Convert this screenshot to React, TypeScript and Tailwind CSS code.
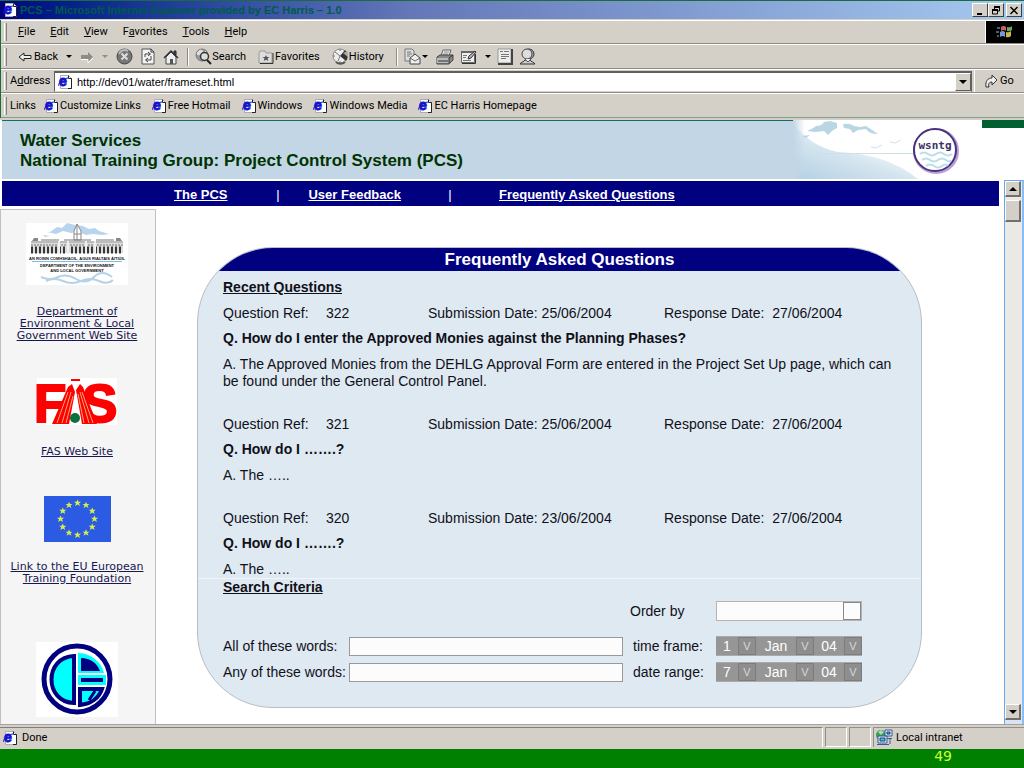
import React from 'react';

const QUESTIONS = [
  {
    ref: '322',
    submitted: '25/06/2004',
    responded: '27/06/2004',
    question: 'How do I enter the Approved Monies against the Planning Phases?',
    answer:
      'The Approved Monies from the DEHLG Approval Form are entered in the Project Set Up page, which can be found under the General Control Panel.',
  },
  { ref: '321', submitted: '25/06/2004', responded: '27/06/2004', question: 'How do I …….?', answer: 'The …..' },
  { ref: '320', submitted: '23/06/2004', responded: '27/06/2004', question: 'How do I …….?', answer: 'The …..' },
];

const MENUS = [
  { before: '', key: 'F', after: 'ile' },
  { before: '', key: 'E', after: 'dit' },
  { before: '', key: 'V', after: 'iew' },
  { before: 'F', key: 'a', after: 'vorites' },
  { before: '', key: 'T', after: 'ools' },
  { before: '', key: 'H', after: 'elp' },
];

const QUICK_LINKS = ['Customize Links', 'Free Hotmail', 'Windows', 'Windows Media', 'EC Harris Homepage'];

const PageIcon = () => (
  <svg width="16" height="16" viewBox="0 0 16 16" className="shrink-0" aria-hidden="true">
    <path d="M3.500 1.500h8l3 3v10h-11z" fill="#fff" stroke="#aab" />
    <path d="M11.500 1.500v3h3v10H11" fill="none" stroke="#222" />
    <text x="2" y="12" fontSize="14" fontWeight="900" fill="#1414c8" stroke="#1414c8" strokeWidth="1" fontFamily="Liberation Sans, sans-serif">
      e
    </text>
    <path d="M2 12C0 10 6 4 11 4" fill="none" stroke="#1414c8" />
  </svg>
);

const BackIcon = () => (
  <svg width="14" height="12" viewBox="0 0 14 12" aria-hidden="true">
    <path d="M1 6l5-4v2.500h7v3H6V10z" fill="#eee" stroke="#222" />
  </svg>
);

const ForwardIcon = () => (
  <svg width="14" height="12" viewBox="0 0 14 12" aria-hidden="true">
    <path d="M13 6L8 1v3H1v4h7v3z" fill="#8c8c88" />
    <path d="M1 8.500h7V12l5-5" fill="none" stroke="#fff" />
  </svg>
);

const StopIcon = () => (
  <svg width="17" height="17" viewBox="0 0 17 17" aria-hidden="true">
    <circle cx="8.500" cy="8.500" r="7.500" fill="#777" stroke="#444" />
    <path d="M3 6a6 6 0 0 1 9-3" fill="none" stroke="#bbb" strokeWidth="2" />
    <path d="M5.500 5.500l6 6m0-6l-6 6" stroke="#ddd" strokeWidth="2" />
  </svg>
);

const RefreshIcon = () => (
  <svg width="14" height="17" viewBox="0 0 14 17" aria-hidden="true">
    <path d="M1 1h9l3 3v12H1z" fill="#f4f4f4" stroke="#555" />
    <path d="M10 1v3h3" fill="none" stroke="#333" />
    <path d="M4 9V6h5M7 4l2.500 2L7 8M10 8v4H5m2-2l-2.500 2L7 14" fill="none" stroke="#444" />
  </svg>
);

const HomeIcon = () => (
  <svg width="16" height="16" viewBox="0 0 16 16" aria-hidden="true">
    <path d="M11 2h2v4h-2z" fill="#555" stroke="#222" />
    <path d="M3 8v7h10V8L8 3z" fill="#eee" stroke="#444" />
    <path d="M1 9l7-7 7 7" fill="none" stroke="#333" strokeWidth="1.500" />
    <path d="M7 10h3v5H7z" fill="#555" />
  </svg>
);

const SearchIcon = () => (
  <svg width="17" height="17" viewBox="0 0 17 17" aria-hidden="true">
    <circle cx="7" cy="7" r="6" fill="#999" stroke="#777" />
    <path d="M2 5l3-3 3 1-2 3-3 1zM10 3l2 3" fill="#ddd" stroke="#ddd" />
    <circle cx="9.500" cy="8.500" r="4" fill="#ddd" stroke="#333" strokeWidth="1.500" />
    <path d="M12 12l4 4" stroke="#222" strokeWidth="2" />
  </svg>
);

const FavoritesIcon = () => (
  <svg width="16" height="14" viewBox="0 0 16 14" aria-hidden="true">
    <path d="M1 3l1-2h5l1 2h6v10H1z" fill="#ddd" stroke="#999" />
    <path d="M15 3v10.500H2" fill="none" stroke="#333" />
    <path d="M8 5l1 2h2.500l-2 1.500 .8 2.500L8 9.700 5.700 11l.8-2.500-2-1.500H7z" fill="#555" />
  </svg>
);

const HistoryIcon = () => (
  <svg width="17" height="17" viewBox="0 0 17 17" aria-hidden="true">
    <circle cx="8" cy="8" r="7" fill="#eee" stroke="#888" />
    <path d="M8 8L13 2a8 8 0 0 1 1 11z" fill="#333" />
    <path d="M3 4l5 4-2 5M8 1v2M1 8h2M8 15v-2" fill="none" stroke="#777" />
    <path d="M11 5l5-2v6z" fill="#aaa" />
    <path d="M4 14a7 7 0 0 0 9 0" fill="none" stroke="#555" strokeWidth="2" />
  </svg>
);

const MailIcon = () => (
  <svg width="17" height="17" viewBox="0 0 17 17" aria-hidden="true">
    <path d="M1 1h7l2 2v10H1z" fill="#ddd" stroke="#777" />
    <path d="M3 4h4M3 6h5M3 8h3" stroke="#777" />
    <path d="M6 10l5-4 5 4v6H6z" fill="#eee" stroke="#444" />
    <path d="M6 10l5 3 5-3" fill="none" stroke="#666" />
  </svg>
);

const PrintIcon = () => (
  <svg width="18" height="16" viewBox="0 0 18 16" aria-hidden="true">
    <path d="M5 7l2-6h8l-2 6z" fill="#eee" stroke="#666" />
    <path d="M8 3h5M7 5h5" stroke="#888" />
    <path d="M1 8l3-2h13v5l-4 4H1z" fill="#888" stroke="#444" />
    <path d="M1 9h12v5H1z" fill="#bbb" />
    <path d="M2 12h10M13 9l4-3M13 14V9" stroke="#333" />
  </svg>
);

const EditIcon = () => (
  <svg width="17" height="15" viewBox="0 0 17 15" aria-hidden="true">
    <path d="M1.500 2.500h13v11h-13z" fill="#eee" stroke="#666" />
    <path d="M1 2h13v2H1z" fill="#666" />
    <path d="M3 6.500h4M3 8.500h3M3 11.500h8" stroke="#777" />
    <path d="M8 10l1-3 6-5 1 1-5 6z" fill="#bbb" stroke="#333" />
    <path d="M15.500 5v9.500H2" fill="none" stroke="#333" />
  </svg>
);

const DiscussIcon = () => (
  <svg width="16" height="17" viewBox="0 0 16 17" aria-hidden="true">
    <path d="M1 1h13v14H1z" fill="#eee" stroke="#999" />
    <path d="M15 1v15H1" fill="none" stroke="#444" strokeWidth="2" />
    <path d="M3 3.500h3M7 3.500h5M4 6.500h8M4 8.500h8M4 10.500h5" stroke="#777" />
  </svg>
);

const MessengerIcon = () => (
  <svg width="17" height="17" viewBox="0 0 17 17" aria-hidden="true">
    <path d="M1 16c1-2 4-2 5-4h5c1 2 4 2 5 4z" fill="#ccc" stroke="#333" />
    <circle cx="10" cy="6" r="5" fill="#aaa" stroke="#333" />
    <circle cx="8" cy="6" r="5" fill="#ddd" stroke="#444" />
    <path d="M6 11l3 3 3-3" fill="#eee" stroke="#555" />
  </svg>
);

const GoIcon = () => (
  <svg width="13" height="15" viewBox="0 0 13 15" aria-hidden="true">
    <path d="M1 13C0 7 3 4 7 4V1l5 5-5 5V8c-3 0-4 2-3 5z" fill="#eee" stroke="#333" />
  </svg>
);

const WindowsFlag = () => (
  <svg width="20" height="16" viewBox="0 0 20 16" aria-hidden="true">
    <path d="M2 3h3v2H2zM1 7h3v2H1zM2 11h2v2H2z" fill="#4a5a80" />
    <path d="M6 3q3-2 5 0v4q-2-2-5 0z" fill="#c86450" />
    <path d="M12 3q3 1 5-1v4q-2 2-5 1z" fill="#6aa860" />
    <path d="M5 8q3-2 5 0v5q-2-2-5 0z" fill="#7898d8" />
    <path d="M11 8q3 1 5-1v5q-2 2-5 1z" fill="#c8b84c" />
  </svg>
);

const IntranetIcon = () => (
  <svg width="17" height="17" viewBox="0 0 17 17" aria-hidden="true">
    <circle cx="5" cy="6" r="5" fill="#3aa04a" />
    <path d="M2 3l3-2 3 2-3 3z" fill="#a8d8c8" />
    <path d="M9 1h7v6H9zM2 7h9v7H2z" fill="#dbe8f4" stroke="#3c5c98" />
    <path d="M4 9h5v3H4zM11 3h3v2h-3z" fill="#38c8e8" stroke="#1c3c78" />
    <path d="M1 15.500h12M11 9.500h5M14 10v5" stroke="#3c5c88" />
  </svg>
);

const Arrow = ({ up = false, small = false }: { up?: boolean; small?: boolean }) => (
  <svg width={small ? 6 : 8} height={small ? 3 : 4} viewBox="0 0 8 4" aria-hidden="true">
    <path d={up ? 'M0 4l4-4 4 4z' : 'M0 0h8L4 4z'} fill="currentColor" />
  </svg>
);

const WaterBanner = () => (
  <svg viewBox="0 0 189 59" className="w-[189px] h-[59px] shrink-0" role="img" aria-label="wsntg">
    <defs>
      <linearGradient id="sea" x1="0" y1="1" x2="0.700" y2="0.100">
        <stop offset="0" stopColor="#b4d0e3" />
        <stop offset="0.500" stopColor="#d4e5ef" />
        <stop offset="0.850" stopColor="#fff" />
      </linearGradient>
      <linearGradient id="haze">
        <stop offset="0" stopColor="#c2d6e6" />
        <stop offset="1" stopColor="#c2d6e6" stopOpacity="0" />
      </linearGradient>
    </defs>
    <path d="M0 0h189v59H0z" fill="#fff" />
    <path d="M0 2q16 24 45 30 50 2 80 27H0z" fill="url(#sea)" />
    <path d="M0 0h12v59H0z" fill="url(#haze)" />
    <path d="M14 11q7-3 9-5 6 0 8-4l6-1 7 2v5l-5 3-4 4-4-4-8 1zM50 4q7-1 11 2l6 1 6-1 12 8q-9 0-12-5l-8 1-5 3-3-4-6-1zM9 16l8-1-4 3z" fill="#b9d6e4" />
    <path d="M78 27l5 1 6-3M97 22l5 1 6-3" fill="none" stroke="#d3dfe4" />
    <path d="M20 33.500h103" stroke="#cfe0e4" />
    <circle cx="143" cy="31" r="21" fill="#fff" stroke="#b8a0d4" strokeWidth="4" />
    <circle cx="142" cy="30" r="21" fill="#fff" stroke="#4a3180" strokeWidth="2" />
    <path d="M127 34q4-3 8 0t8 0 8 0 8 0M129 40q4-3 8 0t8 0 8 0 5 0M133 46q4-3 8 0t8 0 6 0" fill="none" stroke="#b9dde9" strokeWidth="2" />
    <text x="142" y="29" textAnchor="middle" fontSize="11" fontWeight="bold" fontFamily="DejaVu Sans Mono, monospace" fill="#3c3468">
      wsntg
    </text>
  </svg>
);

const DepartmentLogo = () => (
  <svg width="102" height="62" viewBox="0 0 102 62" className="bg-white" aria-hidden="true">
    <path d="M24 9l7-5 5 1 5-5 8 2 8 1 6 3 6-1 4 3 10 3-6 1-10-1-7 1-8-3-7 1-8-2-7 3-9-2zM17 12l7 1-5 1z" fill="#b9d4ee" />
    <path d="M51 1l-3 7v9h7V8z" fill="#fff" stroke="#888" />
    <path d="M51 1v16M48 11h7" stroke="#888" />
    <path d="M5 20h92v10H5z" fill="#ddd" />
    <path d="M5 19h92M15 17h18M70 17h18M38 17h27" stroke="#777" />
    <path d="M6 18h6v-3H8zM90 18h6l-2-3h-4z" fill="#888" />
    <path d="M5 22h92" stroke="#777" strokeDasharray="2 1" />
    <path d="M5 27h92" stroke="#393939" strokeWidth="7" strokeDasharray="2 2" />
    <path d="M33 18v13M69 18v13M42 18v13M60 18v13" stroke="#eee" strokeWidth="2" />
    <g fontFamily="Liberation Sans, sans-serif" fontWeight="bold" textAnchor="middle" fill="#111">
      <text x="51" y="37" fontSize="4">AN ROINN COMHSHAOIL, AGUS RIALTAIS ÁITIÚIL</text>
      <text x="51" y="44" fontSize="4">DEPARTMENT OF THE ENVIRONMENT</text>
      <text x="51" y="49" fontSize="4">AND LOCAL GOVERNMENT</text>
    </g>
    <path d="M6 38.500h90" stroke="#7ebde0" />
    <path d="M15 54q9 4 17 0t18 2 18-2 18 0M20 58q8-4 17 0t18 0 18 0 14-1" fill="none" stroke="#b5d2e8" strokeWidth="2" />
  </svg>
);

const FasLogo = () => (
  <svg width="80" height="47" viewBox="0 0 80 47" className="bg-white overflow-visible" aria-hidden="true">
    <g fontFamily="Liberation Sans, sans-serif" fontWeight="bold" fontSize="53" fill="#f00" stroke="#f00" strokeWidth="2">
      <text x="-3" y="44">F</text>
      <text x="45" y="44">S</text>
    </g>
    <path d="M34 1h9v2h-9z" fill="#f00" />
    <path d="M31 9l4-3 3 8-6 32H15zM39 12l4-6 3 3 14 37H45z" fill="#f00" />
    <path d="M31 14L20 45M34 14l-9 31M36 18l-7 27M41 16l6 29M43 14l9 31M45 14l11 31" stroke="#f9a878" />
    <circle cx="38" cy="40" r="5" fill="#0b7040" />
  </svg>
);

const STAR = 'M0-3.500l1 2.300 2.500 0-2 1.600 1 2.600-2.500-1.600-2.500 1.600 1-2.600-2-1.600 2.500 0z';

const EuFlag = () => (
  <svg width="67" height="46" viewBox="0 0 67 46" className="bg-[#2b5be2]" aria-hidden="true">
    {Array.from({ length: 12 }, (_, i) => {
      const a = (i * Math.PI) / 6;
      return <path key={i} d={STAR} fill="#d8ec4c" transform={`translate(${33.5 + 17 * Math.sin(a)} ${23 - 16 * Math.cos(a)})`} />;
    })}
  </svg>
);

const HarrisLogo = () => (
  <svg width="82" height="75" viewBox="0 0 82 75" className="bg-white" aria-hidden="true">
    <circle cx="41" cy="37" r="33" fill="#fff" stroke="#000080" strokeWidth="5" />
    <path d="M38 14v47C8 60 8 15 38 14z" fill="#0ff" stroke="#000080" strokeWidth="4" />
    <path d="M42 11c12 0 23 8 26 20H42z" fill="#0ff" />
    <path d="M45 16c9 0 16 5 19 13H45z" fill="#000080" />
    <path d="M42 33h28v10H42z" fill="#0ff" />
    <path d="M45 36h22v4H45z" fill="#000080" />
    <path d="M44 47h22c-3 9-11 15-22 16z" fill="#0ff" stroke="#000080" strokeWidth="4" />
    <path d="M53 58l6-9" stroke="#000080" strokeWidth="3" />
  </svg>
);

const Grip = () => <span className="w-[3px] h-[18px] border-l border-white border-r border-r-[#808080] shrink-0" />;

const WINDOW_BUTTON =
  'w-4 h-[14px] flex items-center justify-center bg-[#d4d0c8] border border-t-white border-l-white border-b-[#404040] border-r-[#404040]';

const TitleBar = () => (
  <div className="h-5 flex items-center px-[2px] border-t border-[#1b6b3c] bg-linear-to-r from-[#000080] via-[#6477b8] via-40% to-[#a6caf0] border-b border-b-[#d4d0c8]">
    <PageIcon />
    <h1 className="flex-1 pl-[2px] text-[11px] leading-4 font-bold text-[#005a4b] whitespace-nowrap">
      PCS – Microsoft Internet Explorer provided by EC Harris – 1.0
    </h1>
    <button className={WINDOW_BUTTON} aria-label="Minimize">
      <svg width="10" height="9" viewBox="0 0 10 9"><path d="M2 7h5v2H2z" /></svg>
    </button>
    <button className={WINDOW_BUTTON} aria-label="Restore">
      <svg width="10" height="9" viewBox="0 0 10 9">
        <path d="M3.500 3V1h5v4H7M1.500 4h5v4h-5z" fill="none" stroke="#000" />
        <path d="M3 0h6v2H3zM1 3h6v2H1z" />
      </svg>
    </button>
    <button className={`${WINDOW_BUTTON} ml-[2px]`} aria-label="Close">
      <svg width="10" height="9" viewBox="0 0 10 9"><path d="M1.500 1l7 7m0-7l-7 7" stroke="#000" strokeWidth="1.500" /></svg>
    </button>
  </div>
);

const MenuBar = () => (
  <nav className="h-6 flex items-center pl-[3px] border-t border-t-white border-b border-b-[#8f8c86]">
    <Grip />
    <div className="flex-1 flex gap-[15px] pl-[11px]">
      {MENUS.map((menu) => (
        <button key={menu.key}>
          {menu.before}
          <span className="underline">{menu.key}</span>
          {menu.after}
        </button>
      ))}
    </div>
    <div className="w-[39px] h-[22px] flex items-center justify-center bg-black border-l border-white">
      <WindowsFlag />
    </div>
  </nav>
);

const Toolbar = () => (
  <div className="h-[25px] flex items-center pl-[3px] border-t border-t-white border-b border-b-[#8f8c86]">
    <Grip />
    <button className="flex items-center gap-[2px] ml-[11px]"><BackIcon />Back</button>
    <button className="ml-2" aria-label="Back history"><Arrow small /></button>
    <button className="ml-2" aria-label="Forward"><ForwardIcon /></button>
    <button className="ml-2 text-[#8f8c86]" aria-label="Forward history"><Arrow small /></button>
    <button className="ml-2" aria-label="Stop"><StopIcon /></button>
    <button className="ml-2" aria-label="Refresh"><RefreshIcon /></button>
    <button className="ml-2" aria-label="Home"><HomeIcon /></button>
    <span className="h-[18px] ml-2 mr-[6px] border-l border-[#8f8c86] border-r border-r-white" />
    <button className="flex items-center"><SearchIcon />Search</button>
    <button className="flex items-center gap-[1px] ml-3"><FavoritesIcon />Favorites</button>
    <button className="flex items-center ml-3"><HistoryIcon />History</button>
    <span className="h-[18px] ml-3 mr-[6px] border-l border-[#8f8c86] border-r border-r-white" />
    <button className="flex items-center gap-[1px]" aria-label="Mail"><MailIcon /><Arrow small /></button>
    <button className="ml-2" aria-label="Print"><PrintIcon /></button>
    <button className="flex items-center gap-2 ml-[6px]" aria-label="Edit"><EditIcon /><Arrow small /></button>
    <button className="ml-[6px]" aria-label="Discuss"><DiscussIcon /></button>
    <button className="ml-[6px]" aria-label="Messenger"><MessengerIcon /></button>
  </div>
);

const AddressBar = () => (
  <div className="h-6 flex items-center pl-[3px] border-t border-t-white border-b border-b-[#8f8c86]">
    <Grip />
    <label htmlFor="address" className="w-[44px] ml-[3px] shrink-0">
      A<span className="underline">d</span>dress
    </label>
    <div className="flex-1 h-[21px] flex items-center bg-white border border-t-2 border-[#606060] border-b-[#d4d0c8] pl-[2px]">
      <PageIcon />
      <input
        id="address"
        defaultValue="http://dev01/water/frameset.html"
        className="flex-1 ml-1 h-4 font-['Liberation_Sans',sans-serif] text-[11px] outline-none"
      />
      <button
        className="w-4 h-[18px] flex items-center justify-center bg-[#d4d0c8] border border-t-white border-l-white border-[#606060]"
        aria-label="Address list"
      >
        <Arrow />
      </button>
    </div>
    <button className="w-[50px] h-[22px] flex items-center gap-[2px] pl-[10px] ml-[2px] border-l border-white">
      <GoIcon />Go
    </button>
  </div>
);

const LinksBar = () => (
  <div className="h-[25px] flex items-center pl-[3px] border-t border-t-white border-b border-b-[#80a090]">
    <Grip />
    <span className="w-[33px] ml-[3px]">Links</span>
    <div className="flex gap-[10px]">
      {QUICK_LINKS.map((label) => (
        <a key={label} href="#" className="flex items-center gap-[1px]">
          <PageIcon />
          {label}
        </a>
      ))}
    </div>
  </div>
);

const SiteHeader = () => (
  <header className="flex border-t-2 border-[#d4d0c8]">
    <div className="flex-1 ml-[2px] pl-[18px] pt-[10px] bg-[#c2d6e6] border-t border-[#1b6b5c] text-[17px] leading-5 font-bold text-[#003300]">
      <p>Water Services</p>
      <p>National Training Group: Project Control System (PCS)</p>
    </div>
    <WaterBanner />
    <div className="w-[42px] h-2 bg-[#006030]" />
  </header>
);

const SiteNav = () => (
  <nav className="h-[25px] flex items-center ml-[2px] mr-[5px] pt-[2px] pl-[172px] bg-[#000080] text-white text-[13px] leading-4">
    <a href="#" className="font-bold underline">The PCS</a>
    <span className="w-[81px] pl-5 text-center">|</span>
    <a href="#" className="font-bold underline">User Feedback</a>
    <span className="w-[98px] text-center">|</span>
    <a href="#" className="font-bold underline">Frequently Asked Questions</a>
  </nav>
);

const Sidebar = () => (
  <aside className="w-[156px] shrink-0 mt-[3px] pt-[13px] pr-[2px] flex flex-col items-center bg-[#f5f5f5] border border-[#c0c0c0] border-b-0 text-center font-['DejaVu_Sans',sans-serif] text-[11px] leading-3 text-[#181850] whitespace-nowrap">
    <DepartmentLogo />
    <a href="#" className="mt-[21px] underline">
      Department of<br />Environment &amp; Local<br />Government Web Site
    </a>
    <div className="mt-[36px]"><FasLogo /></div>
    <a href="#" className="mt-[21px] underline">FAS Web Site</a>
    <div className="mt-[38px]"><EuFlag /></div>
    <a href="#" className="mt-[19px] underline">
      Link to the EU European<br />Training Foundation
    </a>
    <div className="mt-[57px]"><HarrisLogo /></div>
  </aside>
);

const DropMark = () => (
  <span className="w-[18px] h-full flex items-center justify-center bg-[#8e8e8e] border border-[#7c7c7c] text-[11px] text-[#d8d8d8]" aria-hidden="true">
    V
  </span>
);

const SELECT = 'h-full appearance-none text-center outline-none';

const DatePicker = ({ id, day }: { id: string; day: string }) => (
  <div className="w-[146px] h-5 flex items-center bg-[#969696] border-y border-[#aaa] text-white text-[14px]">
    <select id={id} className={`${SELECT} w-[22px]`}><option>{day}</option></select>
    <DropMark />
    <select aria-label="Month" className={`${SELECT} w-10`}><option>Jan</option></select>
    <DropMark />
    <select aria-label="Year" className={`${SELECT} w-[30px]`}><option>04</option></select>
    <DropMark />
  </div>
);

const FIELD = 'flex-1 min-w-0 h-[19px] mr-[10px] bg-[#fcfcfc] border border-[#999] px-1 outline-none';

const SearchForm = () => (
  <form className="border-t border-[#f0f5f9] pl-[25px] pr-[59px] pb-[25px]">
    <h3 className="font-bold underline">Search Criteria</h3>
    <div className="flex items-center justify-end mt-[5px]">
      <label htmlFor="order" className="w-[86px]">Order by</label>
      <div className="w-[146px] h-5 flex bg-[#fcfcfc] border border-[#b4b4b4]">
        <select id="order" className="flex-1 appearance-none outline-none" />
        <span className="w-[18px] border border-[#888]" />
      </div>
    </div>
    <div className="flex items-center mt-[15px]">
      <label htmlFor="all" className="w-[126px]">All of these words:</label>
      <input id="all" className={FIELD} />
      <label htmlFor="from" className="w-[83px]">time frame:</label>
      <DatePicker id="from" day="1" />
    </div>
    <div className="flex items-center mt-[6px]">
      <label htmlFor="any" className="w-[126px] whitespace-nowrap">Any of these words:</label>
      <input id="any" className={FIELD} />
      <label htmlFor="to" className="w-[83px]">date range:</label>
      <DatePicker id="to" day="7" />
    </div>
  </form>
);

const FaqCard = () => (
  <main className="flex-1 mt-[41px] ml-[41px] mr-[82px] mb-4 self-start rounded-[76px] overflow-hidden border border-[#b8bec4] bg-[#dfe9f2] text-[14px] leading-[17px] text-[#101018]">
    <h2 className="h-[23px] bg-[#000080] text-white text-center text-[17px] leading-[23px] font-bold">
      Frequently Asked Questions
    </h2>
    <section className="pl-[25px] pr-5 pt-2">
      <h3 className="font-bold underline">Recent Questions</h3>
      {QUESTIONS.map((item, idx) => (
        <article key={item.ref} className={idx === 0 ? 'mt-[9px]' : 'mt-[26px]'}>
          <div className="flex">
            <span className="w-[103px]">Question Ref:</span>
            <span className="w-[102px]">{item.ref}</span>
            <span className="w-[236px]">{`Submission Date: ${item.submitted}`}</span>
            <span>{`Response Date:\u00a0 ${item.responded}`}</span>
          </div>
          <p className="mt-2 font-bold">{`Q. ${item.question}`}</p>
          <p className="mt-[9px]">{`A. ${item.answer}`}</p>
        </article>
      ))}
    </section>
    <SearchForm />
  </main>
);

const SCROLL_BUTTON =
  'w-4 h-4 flex items-center justify-center bg-[#d4d0c8] border border-t-white border-l-white border-b-2 border-r-2 border-[#707070]';

const ScrollBar = () => (
  <div className="w-5 flex flex-col mt-[1px] bg-[#ebe9e5] border-t border-l border-[#6aa8ee] border-r-2 border-r-[#8cbcf4]">
    <button className={SCROLL_BUTTON} aria-label="Scroll up"><Arrow up /></button>
    <div className="flex-1 pt-[3px]">
      <div className="w-4 h-[22px] bg-[#d4d0c8] border border-t-white border-l-white border-b-2 border-r-2 border-[#707070]" />
    </div>
    <button className={SCROLL_BUTTON} aria-label="Scroll down"><Arrow /></button>
    <div className="h-1 bg-[#d8e4f4]" />
  </div>
);

const StatusBar = () => (
  <footer className="h-[25px] flex gap-[2px] pt-[2px] pb-[2px] border-t border-[#a8a49c] bg-[#d4d0c8]">
    <div className="flex-1 flex items-center gap-1 pl-[2px] border-t border-[#808080] border-r border-r-white">
      <PageIcon />
      Done
    </div>
    <div className="w-[22px] border border-[#909090] border-r-white border-b-white" />
    <div className="w-[22px] border border-[#909090] border-r-white border-b-white" />
    <div className="w-[151px] flex items-center gap-[3px] pl-[2px] border-l border-t border-[#909090]">
      <IntranetIcon />
      Local intranet
    </div>
  </footer>
);

export default function App() {
  return (
    <div className="min-h-screen flex flex-col bg-white font-['Liberation_Sans',Arial,sans-serif]">
      <TitleBar />
      <div className="bg-[#d4d0c8] border-l border-[#1b6b3c] font-['Roboto',sans-serif] text-[11px] leading-4 text-black">
        <MenuBar />
        <Toolbar />
        <AddressBar />
        <LinksBar />
      </div>
      <SiteHeader />
      <div className="flex-1 flex">
        <div className="flex-1 flex flex-col pt-[2px]">
          <SiteNav />
          <div className="flex-1 flex">
            <Sidebar />
            <FaqCard />
          </div>
        </div>
        <ScrollBar />
      </div>
      <div className="font-['Roboto',sans-serif] text-[11px] leading-4">
        <StatusBar />
      </div>
      <div className="h-[19px] pr-[72px] bg-[#008000] text-right font-['DejaVu_Sans',sans-serif] text-[14px] leading-[15px] text-[#ccff33]">
        49
      </div>
    </div>
  );
}
